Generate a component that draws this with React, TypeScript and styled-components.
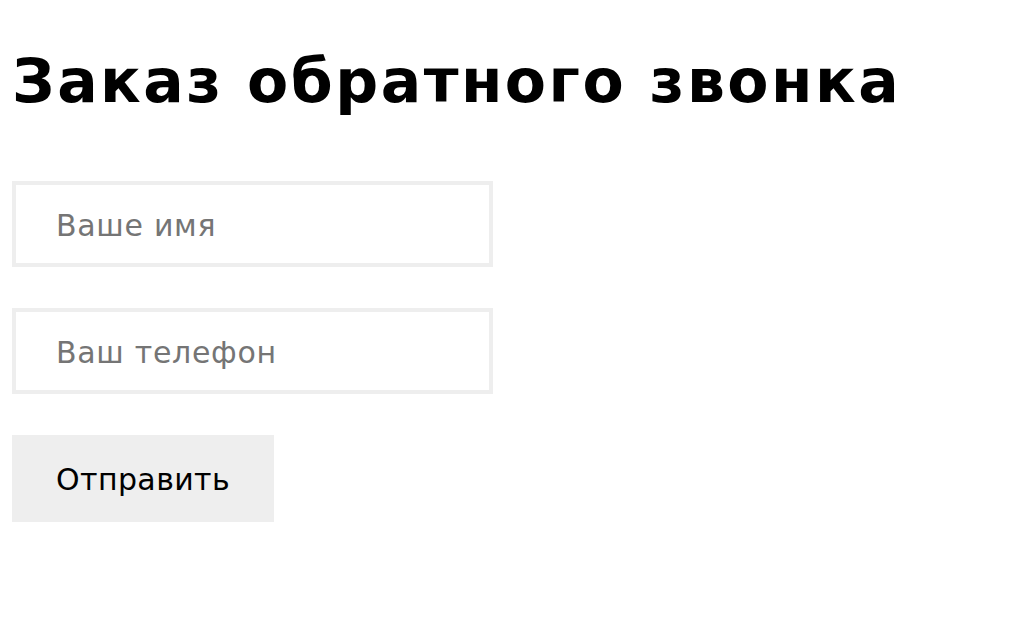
import React from "react";
import styled, { createGlobalStyle } from "styled-components";

const GlobalStyle = createGlobalStyle`
  body {
    margin: 0;
    background: #ffffff;
    font-family: "DejaVu Sans", Verdana, sans-serif;
  }
`;

const Page = styled.div`
  padding: 0 12px;
`;

const Title = styled.h1`
  margin: 0;
  padding-top: 46px;
  font-size: 60px;
  font-weight: 700;
  letter-spacing: 2.5px;
  color: #000000;
  line-height: 70px;
`;

const Form = styled.form`
  display: flex;
  flex-direction: column;
  align-items: flex-start;
  gap: 41px;
  margin-top: 65px;
`;

const Field = styled.input`
  box-sizing: border-box;
  width: 481px;
  height: 86px;
  padding: 2px 40px 0;
  border: 4px solid #eeeeee;
  font-family: "DejaVu Sans", Verdana, sans-serif;
  font-size: 30px;
  letter-spacing: 0.7px;
  color: #000000;
  outline: none;
  &::placeholder {
    color: #757575;
  }
`;

const SubmitBtn = styled.button`
  box-sizing: border-box;
  height: 87px;
  padding: 2px 44px 0;
  border: none;
  background-color: #eeeeee;
  font-family: "DejaVu Sans", Verdana, sans-serif;
  font-size: 30px;
  letter-spacing: 0.4px;
  color: #000000;
  cursor: pointer;
`;

function App() {
  return (
    <Page>
      <GlobalStyle />
      <Title>Заказ обратного звонка</Title>
      <Form onSubmit={(e) => e.preventDefault()}>
        <Field type="text" placeholder="Ваше имя" />
        <Field type="tel" placeholder="Ваш телефон" />
        <SubmitBtn type="submit">Отправить</SubmitBtn>
      </Form>
    </Page>
  );
}

export default App;
